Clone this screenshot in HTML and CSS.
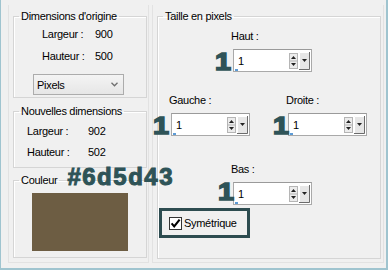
FILE: index.html
```html
<!DOCTYPE html>
<html lang="fr">
<head>
    <meta charset="UTF-8">
    <title>Taille en pixels</title>
    <link rel="stylesheet" href="styles.css">
</head>
<body>
    <div class="window">
        <div class="panel panel-left">
            <fieldset class="group group-orig">
                <legend>Dimensions d'origine</legend>
                <div class="dims dims-orig">
                    <span>Largeur :</span><span>900</span>
                    <span>Hauteur :</span><span>500</span>
                </div>
                <div class="select">
                    <span>Pixels</span>
                    <svg class="chev" width="7" height="5" viewBox="0 0 7 5"><path d="M0.5 0.8 L3.5 3.8 L6.5 0.8" fill="none" stroke="#6f6f6f" stroke-width="1.3"/></svg>
                </div>
            </fieldset>

            <fieldset class="group group-new">
                <legend>Nouvelles dimensions</legend>
                <div class="dims dims-new">
                    <span>Largeur :</span><span>902</span>
                    <span>Hauteur :</span><span>502</span>
                </div>
            </fieldset>

            <fieldset class="group group-color">
                <legend class="legend-color">Couleur<span class="hex">#6d5d43</span></legend>
                <div class="swatch"></div>
            </fieldset>
        </div>

        <div class="panel panel-right">
            <fieldset class="group group-size">
                <legend>Taille en pixels</legend>

                <div class="row row-mid row-top">
                    <div class="field">
                        <span class="field-label">Haut :</span>
                        <div class="spin">
                            <span class="num">1</span>
                            <span class="spin-val">1</span>
                            <svg class="spin-btns" width="21" height="18" viewBox="0 0 21 18">
                                <rect x="0.5" y="1.5" width="8" height="15" fill="#ececec" stroke="#b5b5b5"/>
                                <line x1="1" y1="9" x2="8" y2="9" stroke="#b5b5b5"/>
                                <polygon points="2,7 4.5,4 7,7" fill="#222"/>
                                <polygon points="2,11 4.5,14 7,11" fill="#222"/>
                                <rect x="10" y="0" width="11" height="18" fill="#e6e6e6"/>
                                <path d="M10.5 17.5 V0.5 H20.5" fill="none" stroke="#fff"/>
                                <path d="M10 17.5 H20.5 V0" fill="none" stroke="#6b6b6b"/>
                                <polygon points="13,7 15.5,10 18,7" fill="#222"/>
                            </svg>
                            <span class="caret"></span>
                        </div>
                    </div>
                </div>

                <div class="row row-sides">
                    <div class="field">
                        <span class="field-label">Gauche :</span>
                        <div class="spin">
                            <span class="num">1</span>
                            <span class="spin-val">1</span>
                            <svg class="spin-btns" width="21" height="18" viewBox="0 0 21 18">
                                <rect x="0.5" y="1.5" width="8" height="15" fill="#ececec" stroke="#b5b5b5"/>
                                <line x1="1" y1="9" x2="8" y2="9" stroke="#b5b5b5"/>
                                <polygon points="2,7 4.5,4 7,7" fill="#222"/>
                                <polygon points="2,11 4.5,14 7,11" fill="#222"/>
                                <rect x="10" y="0" width="11" height="18" fill="#e6e6e6"/>
                                <path d="M10.5 17.5 V0.5 H20.5" fill="none" stroke="#fff"/>
                                <path d="M10 17.5 H20.5 V0" fill="none" stroke="#6b6b6b"/>
                                <polygon points="13,7 15.5,10 18,7" fill="#222"/>
                            </svg>
                            <span class="caret"></span>
                        </div>
                    </div>
                    <div class="field">
                        <span class="field-label">Droite :</span>
                        <div class="spin">
                            <span class="num num-tight">1</span>
                            <span class="spin-val">1</span>
                            <svg class="spin-btns" width="21" height="18" viewBox="0 0 21 18">
                                <rect x="0.5" y="1.5" width="8" height="15" fill="#ececec" stroke="#b5b5b5"/>
                                <line x1="1" y1="9" x2="8" y2="9" stroke="#b5b5b5"/>
                                <polygon points="2,7 4.5,4 7,7" fill="#222"/>
                                <polygon points="2,11 4.5,14 7,11" fill="#222"/>
                                <rect x="10" y="0" width="11" height="18" fill="#e6e6e6"/>
                                <path d="M10.5 17.5 V0.5 H20.5" fill="none" stroke="#fff"/>
                                <path d="M10 17.5 H20.5 V0" fill="none" stroke="#6b6b6b"/>
                                <polygon points="13,7 15.5,10 18,7" fill="#222"/>
                            </svg>
                            <span class="caret"></span>
                        </div>
                    </div>
                </div>

                <div class="row row-mid row-bottom">
                    <div class="field">
                        <span class="field-label">Bas :</span>
                        <div class="spin">
                            <span class="num num-tight num-high">1</span>
                            <span class="spin-val">1</span>
                            <svg class="spin-btns" width="21" height="18" viewBox="0 0 21 18">
                                <rect x="0.5" y="1.5" width="8" height="15" fill="#ececec" stroke="#b5b5b5"/>
                                <line x1="1" y1="9" x2="8" y2="9" stroke="#b5b5b5"/>
                                <polygon points="2,7 4.5,4 7,7" fill="#222"/>
                                <polygon points="2,11 4.5,14 7,11" fill="#222"/>
                                <rect x="10" y="0" width="11" height="18" fill="#e6e6e6"/>
                                <path d="M10.5 17.5 V0.5 H20.5" fill="none" stroke="#fff"/>
                                <path d="M10 17.5 H20.5 V0" fill="none" stroke="#6b6b6b"/>
                                <polygon points="13,7 15.5,10 18,7" fill="#222"/>
                            </svg>
                            <span class="caret"></span>
                        </div>
                    </div>
                </div>

                <div class="sym">
                    <svg class="check" width="13" height="13" viewBox="0 0 13 13">
                        <rect x="0.5" y="0.5" width="12" height="12" fill="#fff" stroke="#333"/>
                        <path d="M2.6 6.4 L5.2 9.4 L10.6 2.6" fill="none" stroke="#000" stroke-width="2.1"/>
                    </svg>
                    <span>Symétrique</span>
                </div>
            </fieldset>
        </div>
    </div>
</body>
</html>
```

FILE: styles.css
```css
body {
    margin: 0;
    font-family: "Liberation Sans", Arial, sans-serif;
    font-size: 11px;
    letter-spacing: -0.3px;
    color: #000;
}

.window {
    display: flex;
    width: 388px;
    height: 270px;
    box-sizing: border-box;
    padding-top: 5px;
    background-color: #f0f0f0;
    border-left: 1px solid #9fc4cf;
    border-right: 2px solid #9fc4cf;
    border-bottom: 2px solid #9fc4cf;
}

.panel {
    height: 258px;
    box-sizing: border-box;
    border: 1px solid #e2e2e2;
    border-top: 0;
}

.panel-left {
    width: 141px;
    margin-left: 7px;
}

.panel-right {
    width: 232px;
    margin-left: 3px;
}

/* group boxes */
.group {
    margin: 0 0 0 4px;
    padding: 0;
    min-width: 0;
    box-sizing: border-box;
    border: 1px solid #d5d5d5;
    box-shadow: inset 1px 1px 0 #fff;
}

.group legend {
    margin-left: 5px;
    padding: 0 2px;
    line-height: 13px;
}

.group-orig {
    width: 134px;
    height: 88px;
    margin-top: 5px;
}

.group-new {
    width: 134px;
    height: 63px;
    margin-top: 7px;
}

.group-color {
    width: 134px;
    height: 84px;
    margin-top: 6px;
}

.group-size {
    width: 224px;
    height: 249px;
    margin-top: 5px;
}

.dims {
    display: grid;
    line-height: 14px;
}

.dims-orig {
    grid-template-columns: 53px auto;
    row-gap: 8px;
    margin: 4px 0 0 28px;
}

.dims-new {
    grid-template-columns: 61px auto;
    row-gap: 7px;
    margin: 6px 0 0 13px;
}

.select {
    display: flex;
    align-items: center;
    justify-content: space-between;
    width: 91px;
    height: 21px;
    box-sizing: border-box;
    margin: 11px 0 0 19px;
    padding: 0 5px 0 3px;
    border: 1px solid #acacac;
    background: linear-gradient(#f4f4f4, #e6e6e6);
}

.legend-color {
    position: relative;
}

.hex {
    position: absolute;
    left: calc(100% + 8px);
    top: -9px;
    font-size: 24px;
    line-height: 24px;
    font-weight: bold;
    letter-spacing: 1.5px;
    color: #2e5357;
    -webkit-text-stroke: 1px #2e5357;
    white-space: nowrap;
}

.swatch {
    width: 96px;
    height: 58px;
    margin: 6px 0 0 18px;
    background-color: #6d5d43;
}

/* size fields */
.row {
    display: flex;
}

.row-mid {
    padding-left: 75px;
}

.row-top {
    margin-top: 6px;
}

.row-sides {
    margin-top: 21px;
    padding-left: 13px;
    gap: 38px;
}

.row-bottom {
    margin-top: 26px;
}

.field {
    display: flex;
    flex-direction: column;
    gap: 6px;
}

.field-label {
    line-height: 14px;
    margin-left: -2px;
}

.spin {
    position: relative;
    display: flex;
    align-items: center;
    width: 79px;
    height: 23px;
    box-sizing: border-box;
    padding: 0 1px 0 4px;
    background-color: #fff;
    border: 1px solid #a9a9a9;
    border-top-color: #9a9a9a;
}

.spin-val {
    flex: 1;
}

.caret {
    position: absolute;
    left: 1px;
    bottom: 0;
    width: 3px;
    height: 2px;
    background-color: #5c9bd6;
}

.num {
    position: absolute;
    right: calc(100% + 4px);
    bottom: -3px;
    font-size: 23px;
    line-height: 24px;
    font-weight: bold;
    color: #2e5357;
    -webkit-text-stroke: 1.5px #2e5357;
    transform: scaleX(1.25);
    transform-origin: right bottom;
}

.num-tight {
    right: calc(100% + 1px);
}

.num-high {
    bottom: 0;
}

.sym {
    display: flex;
    align-items: center;
    gap: 2px;
    width: 91px;
    height: 30px;
    box-sizing: border-box;
    margin: 3px 0 0 1px;
    padding-left: 7px;
    border: 3px solid #2d4c50;
}
```
